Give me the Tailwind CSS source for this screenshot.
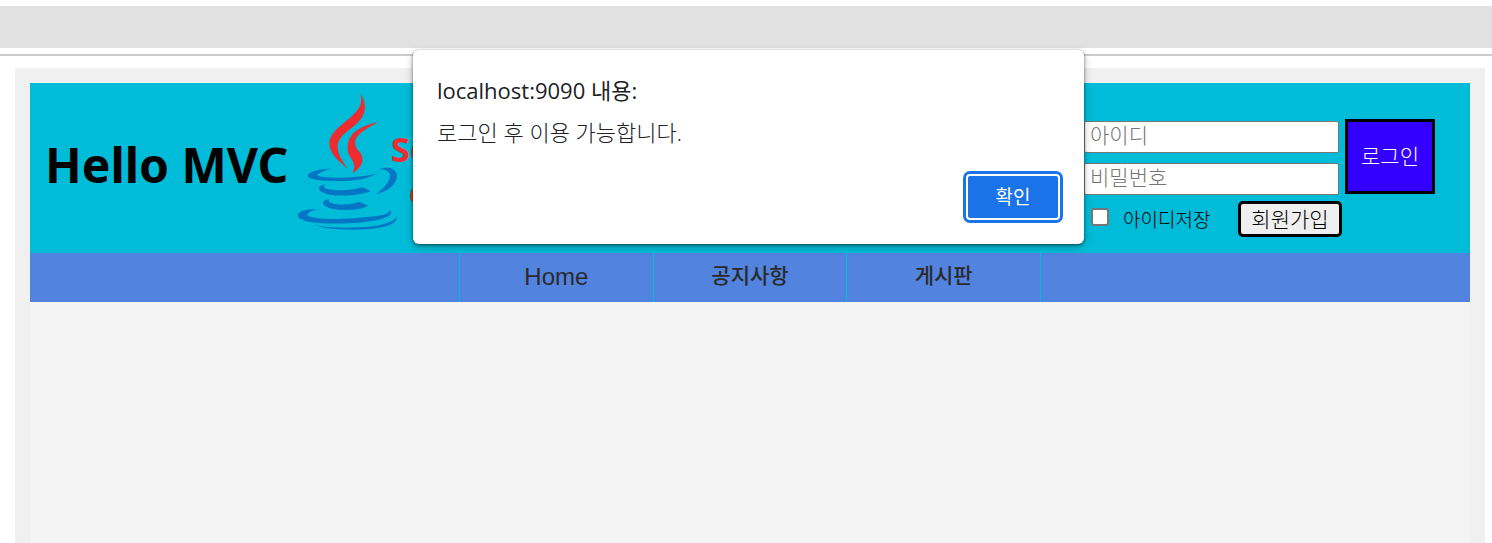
<!DOCTYPE html>
<html lang="ko">
<head>
  <meta charset="UTF-8" />
  <meta name="viewport" content="width=device-width, initial-scale=1.0" />
  <title>Hello MVC</title>
  <script src="https://cdn.jsdelivr.net/npm/@tailwindcss/browser@4"></script>
</head>
<body class="bg-white text-black font-['Open_Sans','Noto_Sans_CJK_KR',sans-serif] min-h-screen flex flex-col overflow-hidden">

  <!-- Browser toolbar -->
  <div class="mt-1.5 h-[42px] bg-[#e1e1e1]"></div>
  <div class="mt-1.5 h-0.5 bg-[#cccccc]"></div>

  <div id="container" class="mt-3 ml-[15px] mr-[7px] grow flex flex-col bg-[#f0f0f0] px-[15px] pt-[15px]">
    <header>
      <div class="h-[170px] flex items-start justify-between bg-[#00bcd8] pl-[15px] pr-[35px]">
        <div class="flex items-start">
          <h1 class="mt-12 w-[235px] text-5xl leading-[68px] font-bold whitespace-nowrap font-['Noto_Sans',sans-serif]">Hello MVC</h1>
          <svg class="w-[220px] h-[170px]" viewBox="0 9 660 510" role="img" aria-label="Java">
            <g fill="#ee2c30">
              <path d="M242 42C260 70 258 94 243 116C224 144 184 158 174 188C168 214 184 240 204 266C174 242 148 220 148 188C150 158 184 136 216 108C240 86 248 70 242 42Z" />
              <path d="M294 126C264 144 234 158 226 180C222 198 232 208 242 220C254 240 246 262 218 280C226 260 224 248 210 230C200 214 200 188 212 170C228 146 260 134 294 126Z" />
            </g>
            <g fill="#0476c4">
              <path d="M154 266C130 272 112 280 112 286C126 298 232 294 290 281C262 298 212 304 164 303C120 302 84 298 83 287C84 276 116 266 154 266Z" />
              <path d="M298 268C318 260 344 262 350 282C356 310 322 336 288 342C308 328 330 308 330 286C328 272 314 268 298 268Z" />
              <path d="M136 313C130 320 130 325 146 328C178 334 220 330 248 322L272 334C240 346 190 350 148 344C112 336 106 320 136 313Z" />
              <path d="M146 357C144 366 150 370 166 372C190 376 218 372 238 365L264 377C236 392 180 394 148 384C122 374 124 362 146 357Z" />
              <path d="M114 388C90 392 78 402 84 408C112 420 190 418 252 412C296 408 330 404 329 390C342 402 326 412 292 420C228 434 118 434 74 422C36 410 52 386 114 388Z" />
              <path d="M106 436C150 446 232 444 282 438C322 432 342 422 352 411C350 430 322 442 272 447C206 452 136 448 106 436Z" />
            </g>
            <g fill="#ee2c30" class="font-['Noto_Sans',sans-serif] font-bold">
              <text x="332" y="245" font-size="104">Se</text>
              <text x="386" y="375" font-size="104">c</text>
            </g>
          </svg>
        </div>

        <form id="loginFrm" class="mt-9 grid grid-cols-[255px_90px] gap-x-1.5 font-light">
          <div class="pt-0.5 flex flex-col gap-2.5">
            <input type="text" id="userId" placeholder="아이디" aria-label="아이디" class="h-8 w-full rounded-xs border border-[#767676] bg-white px-[5px] pb-1 text-[21px] leading-6 placeholder-[#757575]" />
            <input type="password" id="userPw" placeholder="비밀번호" aria-label="비밀번호" class="h-8 w-full rounded-xs border border-[#767676] bg-white px-[5px] pb-1 text-[21px] leading-6 placeholder-[#757575]" />
          </div>
          <button type="submit" class="h-[75px] border-3 border-black bg-[#3300ff] text-[21px] text-white">로그인</button>
          <div class="col-span-2 mt-1.5 flex items-start">
            <input type="checkbox" id="saveId" class="ml-[7px] mt-[7px] size-[18px] appearance-none rounded-[3px] border-2 border-[#767676] bg-white" />
            <label for="saveId" class="ml-3.5 mt-[7px] w-[115px] text-[19px] leading-6">아이디저장</label>
            <button type="button" class="h-9 w-[104px] rounded-[5px] border-3 border-black bg-[#efefef] text-[21px] leading-6">회원가입</button>
          </div>
        </form>
      </div>

      <nav class="h-[49px] bg-[#5283df]">
        <ul class="mx-auto flex h-full w-[582px] border-l border-[#00bcd8] text-center text-2xl leading-12 text-[#2a2a2a] font-['Liberation_Sans_Narrow','Liberation_Sans','Noto_Sans_CJK_KR',sans-serif]">
          <li class="flex-1 border-r border-[#00bcd8]"><a href="#" class="block leading-12">Home</a></li>
          <li class="flex-1 border-r border-[#00bcd8]"><a href="#" class="block text-[21px] leading-[46px] font-medium">공지사항</a></li>
          <li class="flex-1 border-r border-[#00bcd8]"><a href="#" class="block text-[21px] leading-[46px] font-medium">게시판</a></li>
        </ul>
      </nav>
    </header>
    <main class="grow bg-[#f4f4f4]"></main>
  </div>

  <!-- Alert -->
  <div role="alertdialog" aria-labelledby="alertTitle" aria-describedby="alertText" class="absolute top-[50px] left-1/2 w-[671px] -translate-x-[333px] rounded-md bg-white px-6 pt-6 pb-6 text-[#202124] shadow-[0_1px_3px_#00000080,0_3px_8px_#00000040]">
    <h2 id="alertTitle" class="text-[22px] leading-8">localhost:9090 내용:</h2>
    <p id="alertText" class="mt-[11px] text-[22px] leading-[30px] font-light">로그인 후 이용 가능합니다.</p>
    <div class="mt-[27px] flex justify-end">
      <button type="button" class="h-[46px] w-[94px] rounded-sm border-2 border-white bg-[#1a73e8] text-[19px] text-white outline-3 outline-[#1a73e8]">확인</button>
    </div>
  </div>

</body>
</html>
